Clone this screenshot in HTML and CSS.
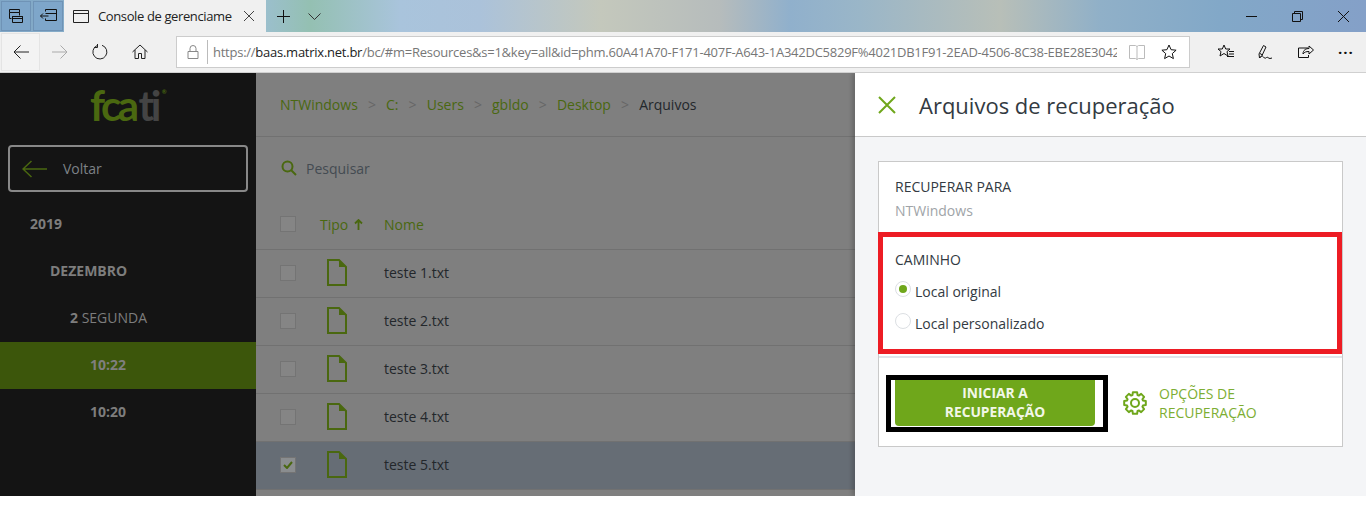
FILE: index.html
```html
<!DOCTYPE html>
<html lang="pt-BR">
<head>
<meta charset="utf-8">
<title>Console de gerenciamento</title>
<link rel="stylesheet" href="styles.css">
</head>
<body>
<div class="window">
  <header class="titlebar">
    <div class="tabtools">
      <button class="tabtool"><svg width="16" height="16" viewBox="0 0 16 16" fill="none" stroke="#111"><path d="M1.5 1.5h10v3h-10zM1.5 4.500v6h2M4.500 8.500h10v6h-10zM4.500 8.500h10v2h-10zM11.500 4.500v3"/></svg></button>
      <button class="tabtool"><svg width="17" height="14" viewBox="0 0 17 14" fill="none" stroke="#111"><path d="M5.500 2.500v-2h11v11h-11v-2M5.500 4.500h11M.5 7h8M3 4.500L.5 7 3 9.500"/></svg></button>
    </div>
    <div class="tab">
      <svg class="tabicon" width="16" height="13" viewBox="0 0 16 13" fill="none" stroke="#222"><path d="M.5.5h15v12H.5zM.5 3.500h15"/></svg>
      <span class="tabtext">Console de gerenciame</span>
      <svg class="tabclose" width="10" height="10" viewBox="0 0 10 10" stroke="#444" fill="none"><path d="M0 0l10 10M10 0L0 10"/></svg>
    </div>
    <svg class="newtab" width="13" height="13" viewBox="0 0 13 13" stroke="#111" fill="none"><path d="M6.500 0v13M0 6.500h13"/></svg>
    <svg class="tabmenu" width="13" height="7" viewBox="0 0 13 7" stroke="#333" fill="none"><path d="M.5.500l6 6 6-6"/></svg>
    <div class="winctl">
      <svg width="11" height="11" viewBox="0 0 11 11" stroke="#111" fill="none"><path d="M0 5.500h11"/></svg>
      <svg width="11" height="11" viewBox="0 0 11 11" stroke="#111" fill="none"><path d="M.5 2.500h8v8h-8zM2.500 2.500v-2h8v8h-2"/></svg>
      <svg width="11" height="11" viewBox="0 0 11 11" stroke="#111" fill="none"><path d="M0 0l11 11M11 0L0 11"/></svg>
    </div>
  </header>

  <nav class="toolbar">
    <div class="navbtn navbtn-active"><svg width="16" height="14" viewBox="0 0 16 14" stroke="#222" fill="none"><path d="M16 7H1M7.500.5L1 7l6.500 6.500"/></svg></div>
    <div class="navbtn navbtn-plain"><svg width="16" height="14" viewBox="0 0 16 14" stroke="#aaa" fill="none"><path d="M0 7h15M8.500.5L15 7l-6.500 6.500"/></svg></div>
    <div class="navbtn navbtn-plain"><svg width="16" height="16" viewBox="0 0 16 16" stroke="#222" fill="none"><path d="M5.200 1.500A7 7 0 1 0 10 1.300M5.500 0v3.500H2"/></svg></div>
    <div class="navbtn navbtn-plain"><svg width="16" height="16" viewBox="0 0 16 16" stroke="#222" fill="none"><path d="M.5 8L8 1l7.500 7M3 6v8.500h3.500v-5h3v5H13V6"/></svg></div>
    <div class="address">
      <svg class="lock" width="12" height="14" viewBox="0 0 12 14" stroke="#888" fill="none"><path d="M1 6.500h10v7H1zM3 6.500V3.500a3 3 0 0 1 6 0v3"/></svg>
      <span class="address-sep"></span>
      <span class="url">https://<b>baas.matrix.net.br</b>/bc/#m=Resources&amp;s=1&amp;key=all&amp;id=phm.60A41A70-F171-407F-A643-1A342DC5829F%4021DB1F91-2EAD-4506-8C38-EBE28E3042</span>
      <svg class="reader" width="16" height="15" viewBox="0 0 16 15" stroke="#bbb" fill="none"><path d="M.5.500h6l1.500 1 1.500-1h6v13h-6L8 14.500 6.500 13.500h-6zM8 1.500v13"/></svg>
      <svg class="favstar" width="16" height="16" viewBox="0 0 16 16" stroke="#111" fill="none"><path d="M8 1l2.100 4.700 5 .5-3.800 3.400 1.100 5L8 12l-4.400 2.600 1.100-5L.9 6.200l5-.5z"/></svg>
    </div>
    <div class="tools">
      <svg width="16" height="16" viewBox="0 0 16 16" stroke="#111" fill="none"><path d="M6 1l1.700 4h4.300l-3 2.600L10 12l-4-2.500L2 12l1-4.400L0 5h4.300zM11 7.500h5M11 10h5M9 12.500h7"/></svg>
      <svg width="16" height="16" viewBox="0 0 16 16" stroke="#111" fill="none"><path d="M1.500 14l-.5-4L5.500 1.500 8 3 4 11.500zM2 9.500l2.500 1.500M1.500 14c1.500-2 3-2.500 4-1s2 1.500 3 .5 2 1 3.500 1l2-.5"/></svg>
      <svg width="16" height="16" viewBox="0 0 16 16" stroke="#111" fill="none"><path d="M10 4H.5v9.500h10V11M5 10c0-4 3-5.500 6-5.500V2l4.500 4-4.500 4V7.500C8 7.500 6.500 8 5 10z"/></svg>
      <span class="more">···</span>
    </div>
  </nav>

  <div class="app">
    <aside class="sidebar">
      <div class="logo"><span class="logo-fca">fca</span><span class="logo-ti">ti</span><sup class="logo-r">®</sup></div>
      <div class="back">
        <svg width="25" height="18" viewBox="0 0 25 18" stroke="#4a6810" stroke-width="1.500" fill="none"><path d="M25 9H1M9.500 1L1 9l8.500 8"/></svg>
        <span>Voltar</span>
      </div>
      <ul class="tree">
        <li class="tree-item level-0">2019</li>
        <li class="tree-item level-1">DEZEMBRO</li>
        <li class="tree-item level-2"><strong>2</strong> SEGUNDA</li>
        <li class="tree-item level-3 tree-current">10:22</li>
        <li class="tree-item level-3 tree-after">10:20</li>
      </ul>
    </aside>

    <main class="main">
      <div class="crumbs">
        <a>NTWindows</a><i>&gt;</i><a>C:</a><i>&gt;</i><a>Users</a><i>&gt;</i><a>gbldo</a><i>&gt;</i><a>Desktop</a><i>&gt;</i><span>Arquivos</span>
      </div>
      <div class="search">
        <svg width="16" height="16" viewBox="0 0 16 16" stroke="#4a6810" stroke-width="2" fill="none"><circle cx="6.500" cy="6.500" r="5"/><path d="M10 10l5 5"/></svg>
        <span>Pesquisar</span>
      </div>
      <div class="row row-head">
        <span class="check"></span>
        <span class="col-type">Tipo <svg width="9" height="11" viewBox="0 0 9 11" stroke="#4a6810" stroke-width="1.800" fill="none"><path d="M4.500 11V1M1 4.500L4.500 1 8 4.500"/></svg></span>
        <span class="col-name">Nome</span>
      </div>
      <div class="row"><span class="check"></span><span class="col-type"><svg class="file" width="20" height="27" viewBox="0 0 20 27"><path d="M1 1h11l7 7v18H1z" fill="none" stroke="#4a6810" stroke-width="2"/><path d="M12 1l7 7h-7z" fill="#4a6810"/></svg></span><span class="col-file">teste 1.txt</span></div>
      <div class="row"><span class="check"></span><span class="col-type"><svg class="file" width="20" height="27" viewBox="0 0 20 27"><path d="M1 1h11l7 7v18H1z" fill="none" stroke="#4a6810" stroke-width="2"/><path d="M12 1l7 7h-7z" fill="#4a6810"/></svg></span><span class="col-file">teste 2.txt</span></div>
      <div class="row"><span class="check"></span><span class="col-type"><svg class="file" width="20" height="27" viewBox="0 0 20 27"><path d="M1 1h11l7 7v18H1z" fill="none" stroke="#4a6810" stroke-width="2"/><path d="M12 1l7 7h-7z" fill="#4a6810"/></svg></span><span class="col-file">teste 3.txt</span></div>
      <div class="row"><span class="check"></span><span class="col-type"><svg class="file" width="20" height="27" viewBox="0 0 20 27"><path d="M1 1h11l7 7v18H1z" fill="none" stroke="#4a6810" stroke-width="2"/><path d="M12 1l7 7h-7z" fill="#4a6810"/></svg></span><span class="col-file">teste 4.txt</span></div>
      <div class="row row-selected"><span class="check check-on"><svg width="10" height="8" viewBox="0 0 10 8" stroke="#4a6810" stroke-width="2" fill="none"><path d="M1 4l3 3 5-6"/></svg></span><span class="col-type"><svg class="file" width="20" height="27" viewBox="0 0 20 27"><path d="M1 1h11l7 7v18H1z" fill="none" stroke="#4a6810" stroke-width="2"/><path d="M12 1l7 7h-7z" fill="#4a6810"/></svg></span><span class="col-file">teste 5.txt</span></div>
    </main>

    <section class="panel">
      <div class="panel-head">
        <svg width="18" height="18" viewBox="0 0 18 18" stroke="#6fa71b" stroke-width="2" fill="none"><path d="M1 1l16 16M17 1L1 17"/></svg>
        <h1>Arquivos de recuperação</h1>
      </div>
      <div class="card">
        <div class="card-target">
          <div class="label">RECUPERAR PARA</div>
          <div class="value">NTWindows</div>
        </div>
        <div class="card-path">
          <div class="label label-path">CAMINHO</div>
          <div class="radio"><span class="dot dot-on"></span>Local original</div>
          <div class="radio"><span class="dot"></span>Local personalizado</div>
        </div>
        <div class="card-actions">
          <div class="start-frame"><button class="start">INICIAR A<br>RECUPERAÇÃO</button></div>
          <div class="options">
            <svg width="24" height="24" viewBox="0 0 24 24" fill="none" stroke="#6fa71b" stroke-width="2" stroke-linejoin="round"><circle cx="12" cy="12" r="4"/><polygon points="9.44,4.1 9.9,1.2 14.1,1.2 14.56,4.1 15.78,4.6 18.15,2.88 21.12,5.85 19.4,8.22 19.9,9.44 22.8,9.9 22.8,14.1 19.9,14.56 19.4,15.78 21.12,18.15 18.15,21.12 15.78,19.4 14.56,19.9 14.1,22.8 9.9,22.8 9.44,19.9 8.22,19.4 5.85,21.12 2.88,18.15 4.6,15.78 4.1,14.56 1.2,14.1 1.2,9.9 4.1,9.44 4.6,8.22 2.88,5.85 5.85,2.88 8.22,4.6"/></svg>
            <span>OPÇÕES DE<br>RECUPERAÇÃO</span>
          </div>
        </div>
      </div>
    </section>
  </div>
</div>
</body>
</html>
```
FILE: styles.css
```css
* { box-sizing: border-box; }
html, body { margin: 0; padding: 0; background: #fff; }
body { font-family: "Open Sans", "Noto Sans", sans-serif; width: 1366px; height: 507px; overflow: hidden; }
.window { display: flex; flex-direction: column; height: 496px; }

.titlebar {
  height: 32px; display: flex; align-items: center; flex: none;
  background: linear-gradient(90deg, #7fa6c6 0, #9cbfd0 260px, #94c0b2 310px, #a9c4dc 400px, #abc2da 480px, #c4c8bc 600px, #b6bcbc 720px, #90b0cc 790px, #9ab6c8 860px, #b8bfb8 1000px, #90b0c8 1100px, #82a8c8 1220px, #84a0c8 1366px);
}
.tabtools { display: flex; gap: 2px; padding-left: 1px; height: 32px; align-items: center; width: 64px; }
.tabtool { width: 30px; height: 30px; padding: 0; background: #7ea6ca; border: 1px solid #6f93b6; display: flex; align-items: center; justify-content: center; }
.tab { width: 202px; height: 32px; background: #f0f0f0; display: flex; align-items: center; }
.tabicon { margin-left: 9px; flex: none; }
.tabtext { margin-left: 9px; font-size: 13px; letter-spacing: -.38px; color: #222; width: 136px; white-space: nowrap; overflow: hidden; }
.tabclose { margin-left: 10px; flex: none; }
.newtab { margin-left: 11px; }
.tabmenu { margin-left: 18px; }
.winctl { margin-left: auto; display: flex; gap: 35px; padding-right: 17px; }

.toolbar { height: 41px; flex: none; background: #f0f0f0; border-bottom: 1px solid #d0d0d0; display: flex; align-items: center; }
.navbtn { width: 39px; height: 38px; display: flex; align-items: center; justify-content: center; }
.navbtn-active { margin-left: 1px; background: #f3f3f3; border: 1px solid #e4e4e4; }
.navbtn-plain { width: 40px; }
.address { margin-left: 16px; width: 1014px; height: 32px; background: #fff; border: 1px solid #ccc; display: flex; align-items: center; }
.lock { margin-left: 10px; flex: none; }
.address-sep { margin-left: 8px; width: 1px; height: 24px; background: #bbb; flex: none; }
.url { margin-left: 5px; width: 904px; flex: none; font-size: 13px; letter-spacing: -.25px; color: #777; white-space: nowrap; overflow: hidden; }
.url b { font-weight: 400; color: #222; }
.reader { margin-left: 12px; flex: none; }
.favstar { margin-left: 16px; flex: none; }
.tools { display: flex; align-items: center; gap: 24px; margin-left: 28px; }
.more { font-size: 15px; letter-spacing: 1px; color: #111; font-weight: 700; }

.app { flex: 1; display: flex; min-height: 0; overflow: hidden; }
.sidebar { width: 256px; flex: none; background: #141414; }
.logo { height: 63px; padding-left: 90px; display: flex; align-items: center; font-family: "Lato", sans-serif; font-size: 42px; font-weight: 700; line-height: 1; letter-spacing: -3.500px; }
.logo-fca { color: #4a6810; }
.logo-ti { color: #444; margin-left: 3px; }
.logo-r { color: #4a6810; font-size: 6px; letter-spacing: 0; align-self: flex-start; margin: 16px 0 0 4px; }
.back { margin: 9px 8px 0; height: 47px; border: 2px solid #888; border-radius: 4px; display: flex; align-items: center; padding-left: 12px; gap: 16px; color: #7d8287; font-size: 14px; }
.tree { list-style: none; margin: 8px 0 0; padding: 0; }
.tree-item { height: 47px; display: flex; align-items: center; font-size: 14px; font-weight: 700; color: #7d7d7d; white-space: pre; }
.tree-item strong { font-weight: 700; }
.level-0 { padding-left: 30px; }
.level-1 { padding-left: 50px; }
.level-2 { padding-left: 70px; font-weight: 400; }
.level-3 { padding-left: 90px; }
.tree-current { margin-top: 1px; padding-bottom: 2px; background: #3c560b; color: #7f7f7f; }
.tree-after { height: 46px; padding-bottom: 1px; }

.main { width: 599px; flex: none; background: #7f7f7f; overflow: hidden; }
.crumbs { height: 64px; border-bottom: 1px solid #717171; padding: 0 0 0 24px; display: flex; align-items: center; font-size: 14px; color: #23272b; }
.crumbs a { color: #4a6810; }
.crumbs i { font-style: normal; color: #666; width: 28.200px; text-align: center; font-size: 14px; }
.search { height: 64px; padding-left: 25px; padding-bottom: 2px; display: flex; align-items: center; gap: 9px; font-size: 14px; color: #444b52; }
.row { height: 48px; padding-bottom: 2px; display: flex; align-items: center; border-bottom: 1px solid #717171; font-size: 14px; flex: none; }
.row-head { height: 49px; }
.row-selected { background: #666d75; }
.check { width: 16px; height: 16px; margin-left: 24px; background: #858585; border: 1px solid #747474; display: flex; align-items: center; justify-content: center; flex: none; }
.check-on { background: #8a8d8f; }
.col-type { width: 64px; margin-left: 24px; display: flex; align-items: center; gap: 6px; color: #4a6810; flex: none; }
.file { margin-left: 7px; }
.col-name { color: #4a6810; }
.col-file { color: #23272b; }

.panel { flex: 1; background: #f4f5f7; box-shadow: -3px 0 4px rgba(0, 0, 0, .18); position: relative; }
.panel-head { height: 64px; background: #fff; border-bottom: 1px solid #c9c9c9; display: flex; align-items: center; padding-left: 23px; gap: 23px; }
.panel-head h1 { margin: 0; font-size: 22px; font-weight: 400; color: #333a42; }
.card { margin: 24px 23px 0; width: 465px; height: 286px; background: #fff; border: 1px solid #c9c9c9; }
.card-target { height: 70px; padding: 15px 16px 0; }
.label { font-size: 14px; line-height: 20px; color: #333a42; }
.label-path { margin-bottom: 5px; }
.value { margin-top: 4px; font-size: 14px; line-height: 20px; color: #a0a4a8; }
.card-path { height: 122px; margin-left: -1px; border: 5px solid #ed1c24; padding: 13px 12px 0; }
.radio { display: flex; align-items: center; gap: 4px; height: 32px; font-size: 14px; color: #333a42; }
.dot { width: 16px; height: 16px; border-radius: 50%; border: 1px solid #dcdfe3; background: #fff; margin-top: -5px; display: flex; align-items: center; justify-content: center; flex: none; }
.dot-on::after { content: ""; width: 8px; height: 8px; border-radius: 50%; background: #6fa71b; }
.card-actions { margin-top: 2px; border-top: 2px solid #e1e4ea; padding: 17px 0 0 7px; display: flex; align-items: center; }
.start-frame { width: 222px; height: 57px; border: 5px solid #000; background: #fff; padding: 0 8px 1px 4px; flex: none; }
.start { width: 200px; height: 46px; padding: 0 0 2px; border: 0; background: #6fa71b; color: #f2f7e8; font: 700 13.800px/19px "Open Sans", sans-serif; border-radius: 0 0 4px 4px; }
.options { margin: -2px 0 0 15px; display: flex; align-items: center; gap: 12px; color: #7dae33; font-size: 14px; line-height: 19px; }
```
